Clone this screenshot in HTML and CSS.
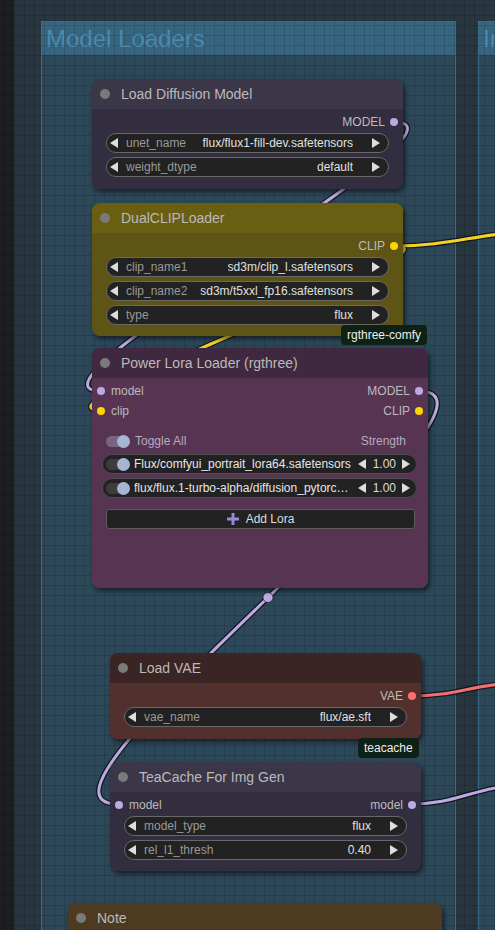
FILE: index.html
```html
<!DOCTYPE html>
<html>
<head>
<meta charset="utf-8">
<title>ComfyUI - Model Loaders</title>
<link rel="stylesheet" href="styles.css">
</head>
<body>
<div class="canvas">
  <div class="group group-outer"></div>
  <div class="group group-main"><div class="group-title">Model Loaders</div></div>
  <div class="group group-next"><div class="group-title">In</div></div>
  <div class="grid"></div>

  <svg class="wires" width="495" height="930" viewBox="0 0 495 930">
    <g class="wire-outline">
      <path d="M394,122 C494,122 1,391 101,391"/>
      <path d="M394,246 C478,246 17,410 101,410"/>
      <path d="M394,246 C440,246 465,238 500,234"/>
      <path d="M418,391 C545.6,391 -9.6,804 118,804"/>
      <path d="M411,696 C450,696 465,688 500,684"/>
      <path d="M411,804 C450,804 465,793 500,787"/>
    </g>
    <g class="wire wire-model">
      <path d="M394,122 C494,122 1,391 101,391"/>
      <path d="M418,391 C545.6,391 -9.6,804 118,804"/>
      <path d="M411,804 C450,804 465,793 500,787"/>
    </g>
    <g class="wire wire-clip">
      <path d="M394,246 C478,246 17,410 101,410"/>
      <path d="M394,246 C440,246 465,238 500,234"/>
    </g>
    <g class="wire wire-vae">
      <path d="M411,696 C450,696 465,688 500,684"/>
    </g>
    <circle class="link-center" cx="268" cy="597.5" r="5"/>
  </svg>

  <!-- Load Diffusion Model -->
  <div class="node node-slate n-diffusion">
    <div class="node-title"><span class="title-dot"></span><span>Load Diffusion Model</span></div>
    <div class="node-body">
      <div class="slot-row"><span></span><span class="slot-out">MODEL<i class="dot dot-model"></i></span></div>
      <div class="widget"><span class="arr arr-l"></span><span class="w-label">unet_name</span><span class="w-value">flux/flux1-fill-dev.safetensors</span><span class="arr arr-r"></span></div>
      <div class="widget"><span class="arr arr-l"></span><span class="w-label">weight_dtype</span><span class="w-value">default</span><span class="arr arr-r"></span></div>
    </div>
  </div>

  <!-- DualCLIPLoader -->
  <div class="node node-olive n-dualclip">
    <div class="node-title"><span class="title-dot"></span><span>DualCLIPLoader</span></div>
    <div class="node-body">
      <div class="slot-row"><span></span><span class="slot-out">CLIP<i class="dot dot-clip"></i></span></div>
      <div class="widget"><span class="arr arr-l"></span><span class="w-label">clip_name1</span><span class="w-value">sd3m/clip_l.safetensors</span><span class="arr arr-r"></span></div>
      <div class="widget"><span class="arr arr-l"></span><span class="w-label">clip_name2</span><span class="w-value">sd3m/t5xxl_fp16.safetensors</span><span class="arr arr-r"></span></div>
      <div class="widget"><span class="arr arr-l"></span><span class="w-label">type</span><span class="w-value">flux</span><span class="arr arr-r"></span></div>
    </div>
  </div>
  <div class="badge b-rgthree">rgthree-comfy</div>

  <!-- Power Lora Loader -->
  <div class="node node-purple n-lora">
    <div class="node-title"><span class="title-dot"></span><span>Power Lora Loader (rgthree)</span></div>
    <div class="node-body">
      <div class="slot-row"><span class="slot-in"><i class="dot dot-model"></i>model</span><span class="slot-out">MODEL<i class="dot dot-model"></i></span></div>
      <div class="slot-row"><span class="slot-in"><i class="dot dot-clip"></i>clip</span><span class="slot-out">CLIP<i class="dot dot-clip"></i></span></div>
      <div class="toggle-all">
        <span class="toggle toggle-soft"><i class="knob"></i></span>
        <span class="ta-label">Toggle All</span>
        <span class="ta-strength">Strength</span>
      </div>
      <div class="lora-row">
        <span class="toggle toggle-dark"><i class="knob"></i></span>
        <span class="lora-name">Flux/comfyui_portrait_lora64.safetensors</span>
        <span class="arr arr-l"></span><span class="lora-val">1.00</span><span class="arr arr-r"></span>
      </div>
      <div class="lora-row">
        <span class="toggle toggle-dark"><i class="knob"></i></span>
        <span class="lora-name">flux/flux.1-turbo-alpha/diffusion_pytorc…</span>
        <span class="arr arr-l"></span><span class="lora-val">1.00</span><span class="arr arr-r"></span>
      </div>
      <div class="add-lora">
        <svg class="plus" width="12" height="12" viewBox="0 0 12 12"><rect x="4.5" y="0" width="3" height="12"/><rect x="0" y="4.5" width="12" height="3"/></svg>
        <span>Add Lora</span>
      </div>
    </div>
  </div>

  <!-- Load VAE -->
  <div class="node node-red n-vae">
    <div class="node-title"><span class="title-dot"></span><span>Load VAE</span></div>
    <div class="node-body">
      <div class="slot-row"><span></span><span class="slot-out">VAE<i class="dot dot-vae"></i></span></div>
      <div class="widget"><span class="arr arr-l"></span><span class="w-label">vae_name</span><span class="w-value">flux/ae.sft</span><span class="arr arr-r"></span></div>
    </div>
  </div>
  <div class="badge b-teacache">teacache</div>

  <!-- TeaCache -->
  <div class="node node-slate n-teacache">
    <div class="node-title"><span class="title-dot"></span><span>TeaCache For Img Gen</span></div>
    <div class="node-body">
      <div class="slot-row"><span class="slot-in"><i class="dot dot-model"></i>model</span><span class="slot-out">model<i class="dot dot-model"></i></span></div>
      <div class="widget"><span class="arr arr-l"></span><span class="w-label">model_type</span><span class="w-value">flux</span><span class="arr arr-r"></span></div>
      <div class="widget"><span class="arr arr-l"></span><span class="w-label">rel_l1_thresh</span><span class="w-value">0.40</span><span class="arr arr-r"></span></div>
    </div>
  </div>

  <!-- Note -->
  <div class="node node-note n-note">
    <div class="node-title"><span class="title-dot"></span><span>Note</span></div>
    <div class="node-body"></div>
  </div>
</div>
</body>
</html>
```

FILE: styles.css
```css
* { box-sizing: border-box; }
html, body { margin: 0; padding: 0; }
body {
  width: 495px;
  height: 930px;
  overflow: hidden;
  background: #1d1e20;
  font-family: "Liberation Sans", Arial, sans-serif;
}
.canvas {
  position: relative;
  width: 495px;
  height: 930px;
  overflow: hidden;
}

/* groups */
.group { position: absolute; }
.group-outer {
  left: 14px; top: 0;
  width: 481px; height: 930px;
  background: #27363f;
}
.group-main {
  left: 41px; top: 21px;
  width: 415px; height: 930px;
  background: #2d4859;
  border: 1px solid #3b6c88;
}
.group-next {
  left: 478px; top: 21px;
  width: 80px; height: 930px;
  background: #2d4859;
  border: 1px solid #3b6c88;
}
.group-title {
  height: 33px;
  background: #37657f;
  color: #4b8bb0;
  font-size: 24px;
  line-height: 33px;
  padding-left: 4px;
  white-space: nowrap;
}
.grid {
  position: absolute;
  left: 0; top: 0;
  width: 495px; height: 930px;
  background-image:
    linear-gradient(to right, rgba(0,0,0,0.13) 1px, transparent 1px),
    linear-gradient(to bottom, rgba(0,0,0,0.13) 1px, transparent 1px);
  background-size: 10px 10px;
  background-position: 4px 5px;
}

/* wires */
.wires { position: absolute; left: 0; top: 0; overflow: visible; }
.wires path { fill: none; stroke-linecap: round; }
.wire-outline path { stroke: rgba(10,10,14,0.75); stroke-width: 5.5; }
.wire path { stroke-width: 3; }
.wire-model path { stroke: #bcaae2; }
.wire-clip path { stroke: #f2d22a; }
.wire-vae path { stroke: #f07070; }
.link-center { fill: #bcaae2; stroke: rgba(10,10,14,0.6); stroke-width: 1; }

/* nodes */
.node {
  position: absolute;
  display: flex;
  flex-direction: column;
  border-radius: 8px;
  box-shadow: 2px 3px 5px rgba(0,0,0,0.55);
  font-size: 12px;
  color: #ddd;
}
.node-title {
  height: 30px;
  flex: none;
  display: flex;
  align-items: center;
  padding-left: 8px;
  border-radius: 8px 8px 0 0;
  font-size: 14px;
  color: #bababa;
  white-space: nowrap;
}
.title-dot {
  width: 10px; height: 10px;
  border-radius: 50%;
  background: #7a7a7a;
  margin-right: 11px;
  flex: none;
}
.node-body {
  flex: 1;
  display: flex;
  flex-direction: column;
  padding: 3px 14px 10px;
  border-radius: 0 0 8px 8px;
}

.node-slate .node-title { background: #3c3649; }
.node-slate .node-body { background: #332d40; }
.node-olive .node-title { background: #6a5e12; }
.node-olive .node-body { background: #5e5415; }
.node-purple .node-title { background: #412841; }
.node-purple .node-body { background: #583453; }
.node-red .node-title { background: #3b2424; }
.node-red .node-body { background: #52302d; }
.node-note .node-title { background: #4d3a21; }
.node-note .node-body { background: #5a4530; }

.n-diffusion { left: 92px; top: 79px; width: 311px; height: 110px; }
.n-dualclip { left: 92px; top: 203px; width: 311px; height: 133px; }
.n-lora { left: 92px; top: 348px; width: 336px; height: 240px; }
.n-vae { left: 110px; top: 653px; width: 311px; height: 86px; }
.n-teacache { left: 110px; top: 762px; width: 311px; height: 109px; }
.n-note { left: 68px; top: 903px; width: 374px; height: 80px; }

/* slots */
.slot-row {
  height: 20px;
  flex: none;
  margin: 0 -14px;
  padding: 0 5px;
  display: flex;
  align-items: center;
  justify-content: space-between;
  color: #bbb;
  font-size: 12px;
}
.slot-in, .slot-out { display: flex; align-items: center; }
.slot-in .dot { margin-right: 6px; }
.slot-out .dot { margin-left: 5px; }
.dot {
  display: block;
  width: 8px; height: 8px;
  border-radius: 50%;
}
.dot-model { background: #bcaae2; }
.dot-clip { background: #ffd500; }
.dot-vae { background: #ff6e6e; }

/* combo widgets */
.widget {
  height: 20px;
  flex: none;
  margin-top: 4px;
  display: flex;
  align-items: center;
  padding: 0 8px 0 3px;
  background: #222;
  border: 1px solid #686868;
  border-radius: 10px;
  white-space: nowrap;
}
.slot-row + .widget { margin-top: 1px; }
.w-label { color: #999; margin-left: 8px; flex: 1; }
.w-value { color: #e0e0e0; margin-right: 19px; overflow: hidden; }
.arr { display: block; width: 0; height: 0; flex: none; }
.arr-l {
  border-top: 5px solid transparent;
  border-bottom: 5px solid transparent;
  border-right: 8px solid #ddd;
}
.arr-r {
  border-top: 5px solid transparent;
  border-bottom: 5px solid transparent;
  border-left: 8px solid #ddd;
}

/* power lora */
.toggle-all {
  height: 20px;
  margin-top: 10px;
  display: flex;
  align-items: center;
  padding-right: 8px;
  color: #b6abbd;
}
.toggle {
  width: 23px; height: 11px;
  border-radius: 6px;
  display: flex;
  align-items: center;
  justify-content: flex-end;
  flex: none;
}
.toggle-soft { background: rgba(150,140,170,0.55); }
.toggle-dark { background: #3c3c3c; }
.knob {
  display: block;
  width: 13px; height: 13px;
  border-radius: 50%;
  background: #a6b5d3;
  margin-right: -1px;
  flex: none;
}
.ta-label { margin-left: 6px; }
.ta-strength { margin-left: auto; }
.lora-row {
  height: 20px;
  flex: none;
  margin: 3px -3px 0 -4px;
  display: flex;
  align-items: center;
  padding: 0 6px 0 3px;
  background: #222;
  border: 1px solid #4e4e4e;
  border-radius: 10px;
  white-space: nowrap;
}
.lora-row + .lora-row { margin-top: 4px; }
.lora-name { margin-left: 5px; flex: 1; min-width: 0; overflow: hidden; color: #e6e6e6; }
.lora-row .arr-l { margin-left: 4px; }
.lora-val { margin: 0 6px 0 7px; color: #ddd; }
.add-lora {
  height: 20px;
  flex: none;
  margin-top: 11px;
  margin-right: -1px;
  display: flex;
  align-items: center;
  justify-content: center;
  gap: 7px;
  background: #222;
  border: 1px solid #5c5c5c;
  border-radius: 3px;
  color: #ddd;
}
.plus { fill: #9587da; display: block; }

/* badges */
.badge {
  position: absolute;
  height: 20px;
  line-height: 20px;
  padding: 0 6px;
  background: #0d2114;
  color: #eee;
  font-size: 12px;
  border-radius: 4px;
  white-space: nowrap;
}
.b-rgthree { left: 341px; top: 325px; }
.b-teacache { left: 358px; top: 738px; }
```
